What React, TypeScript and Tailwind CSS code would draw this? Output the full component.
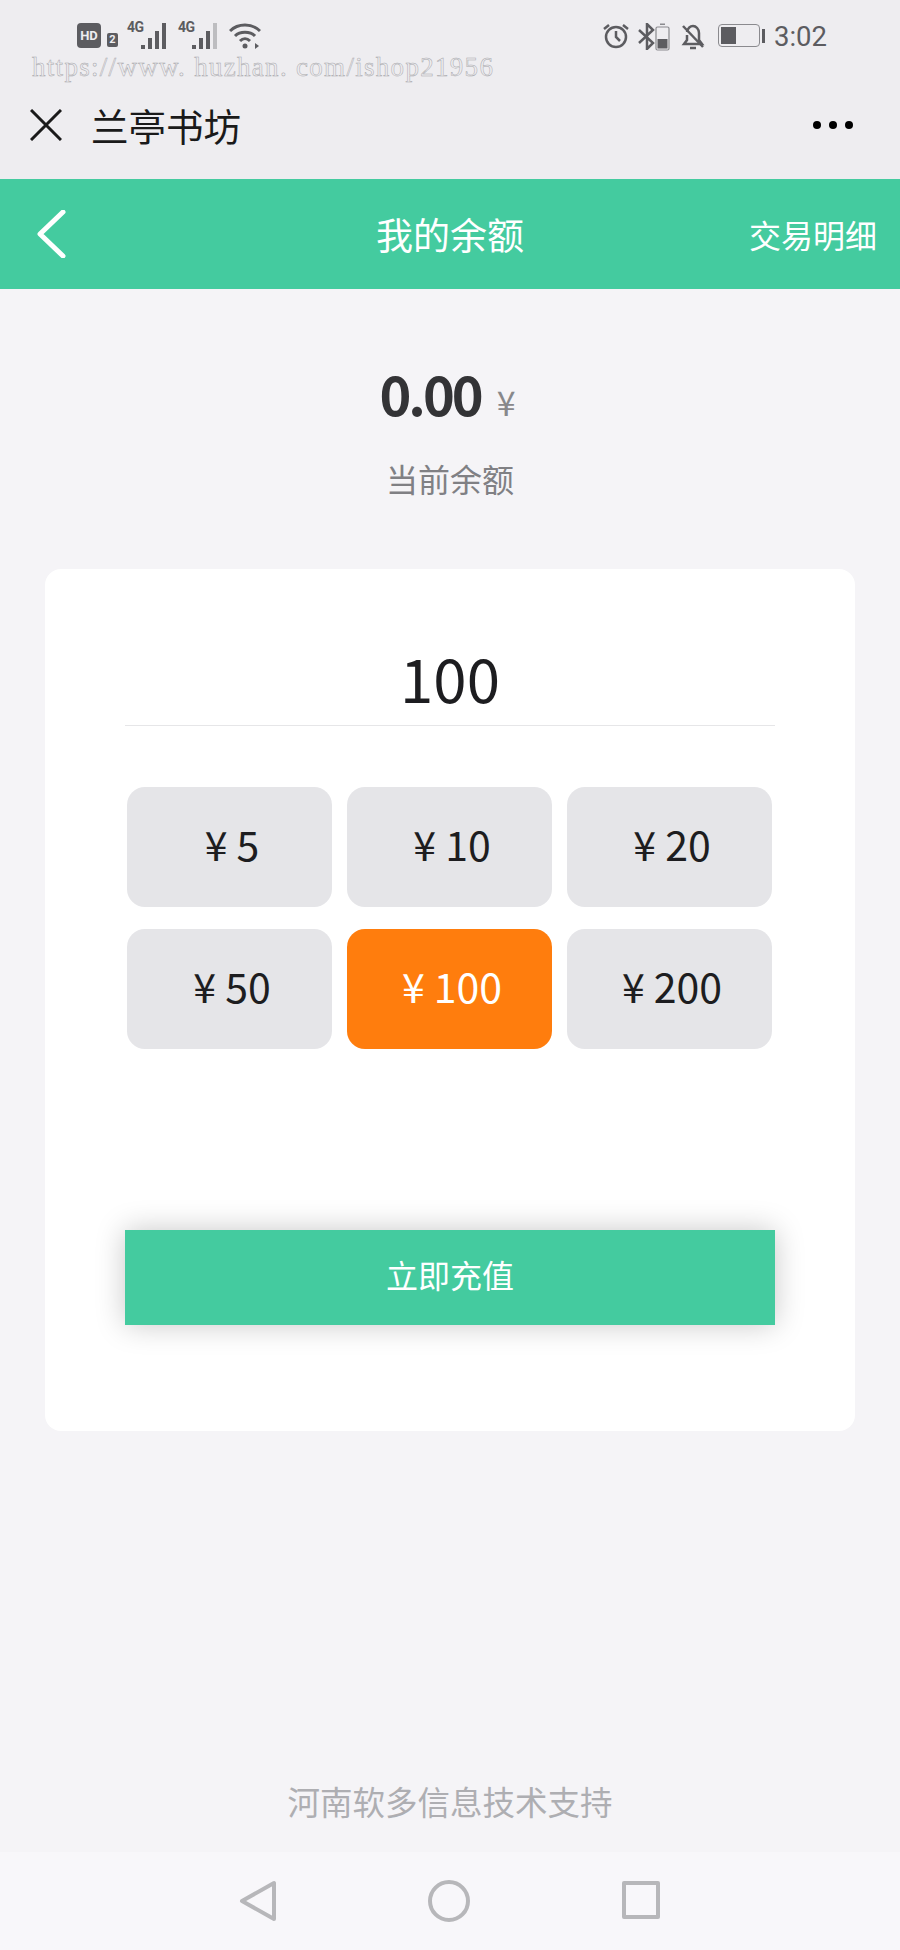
import { useState } from 'react';

const amounts = [5, 10, 20, 50, 100, 200];

// 4G label plus the four rising signal bars
const Signal = ({ dim }: { dim?: boolean }) => (
  <div className="relative h-[27px] w-[43px]">
    <span className="absolute left-[-1px] top-[-4px] font-['Roboto',sans-serif] text-[14px] font-bold leading-[16px] tracking-[-0.5px] text-[#5c5c60]">
      4G
    </span>
    <svg viewBox="0 0 43 27" className="absolute inset-0 h-[27px] w-[43px]" fill="#5c5c60">
      <rect x="13" y="22" width="4" height="4" />
      <rect x="20" y="15" width="4" height="11" />
      <rect x="27" y="8" width="4" height="18" />
      <rect x="34" y="0" width="4" height="26" fill={dim ? '#bdbdc0' : '#5c5c60'} />
    </svg>
  </div>
);

const StatusBar = () => (
  <div className="flex h-[60px] items-start justify-between pl-[77px] pr-[73px] pt-[23px] text-[#5c5c60]">
    <div className="flex items-start">
      <div className="flex h-[25px] w-[24px] items-center justify-center rounded-[4px] bg-[#5c5c60] font-['Roboto',sans-serif] text-[13px] font-bold text-[#eeedf0]">
        HD
      </div>
      <div className="ml-[6px] mt-[10px] flex h-[14px] w-[11px] items-center justify-center rounded-[2px] bg-[#5c5c60] font-['Roboto',sans-serif] text-[11px] font-bold text-[#eeedf0]">
        2
      </div>
      <div className="ml-[10px] mr-[8px]">
        <Signal />
      </div>
      <Signal dim />
      <svg viewBox="0 0 32 27" className="ml-[7px] h-[27px] w-[32px]" fill="none" stroke="#5c5c60" strokeWidth="3">
        <path d="M1 8C9 0 23 0 31 8" />
        <path d="M6 13C11 8 21 8 26 13" />
        <path d="M11 18C14 15 18 15 21 18" />
        <circle cx="16" cy="23" r="2.5" fill="#5c5c60" stroke="none" />
        <path d="M26 20v6l4-3z" fill="#5c5c60" stroke="none" />
      </svg>
    </div>
    <div className="flex items-start">
      <svg viewBox="0 0 26 26" className="h-[26px] w-[26px]" fill="none" stroke="#5c5c60" strokeWidth="2.5">
        <circle cx="13" cy="14" r="10" />
        <path d="M13 8v6l4 4" />
        <path d="M1 6l5-4M25 6l-5-4" />
      </svg>
      <svg viewBox="0 0 18 27" className="ml-[8px] h-[27px] w-[18px]" fill="none" stroke="#5c5c60" strokeWidth="2.5">
        <path d="M2 7l14 13-6 6V1l6 6L2 20" />
      </svg>
      <svg viewBox="0 0 15 28" className="h-[28px] w-[15px]" fill="none">
        <rect x="1" y="4" width="13" height="23" rx="1.5" stroke="#8a8a8e" strokeWidth="1.2" />
        <rect x="5" y="0.5" width="5" height="1.5" fill="#8a8a8e" />
        <rect x="2.5" y="16" width="10" height="9.5" fill="#5c5c60" />
      </svg>
      <svg viewBox="0 0 24 27" className="ml-[11px] h-[27px] w-[24px]" fill="none" stroke="#5c5c60" strokeWidth="2.5">
        <path d="M6 9c1-4 3-6 6-6s6 3 6 7v7l3 4H3l3-4v-5" />
        <path d="M9 25h6" />
        <path d="M2 3l20 21" />
      </svg>
      <div className="ml-[13px] mt-[1px] flex items-center">
        <div className="h-[23px] w-[42px] rounded-[4px] border border-[#8a8a8e] p-[2px]">
          <div className="h-full w-[15px] bg-[#5c5c60]" />
        </div>
        <div className="ml-[2px] h-[14px] w-[3px] bg-[#5c5c60]" />
      </div>
      <span className="ml-[9px] mt-[1px] font-['Roboto',sans-serif] text-[27.5px] leading-[26px] text-[#5c5c60]">3:02</span>
    </div>
  </div>
);

export default function App() {
  const [selected, setSelected] = useState(100);

  return (
    <div className="flex h-[1950px] w-[900px] flex-col overflow-hidden bg-[#f5f4f7] font-['Noto_Sans_CJK_SC','Noto_Sans',sans-serif]">
      {/* WeChat webview chrome */}
      <div className="relative h-[179px] bg-[#eeedf0]">
        <StatusBar />
        <span className="absolute left-[32px] top-[52px] font-['Liberation_Serif',serif] text-[27px] leading-[30px] tracking-[1.3px] text-transparent [-webkit-text-stroke:0.5px_#a8a8ac]">
          https://www. huzhan. com/ishop21956
        </span>
        <div className="flex h-[119px] items-center pl-[30px] pr-[47px] pt-[11px]">
          <svg viewBox="0 0 32 32" className="h-[32px] w-[32px]" fill="none" stroke="#1a1a1a" strokeWidth="3">
            <path d="M1 1l30 30M31 1L1 31" />
          </svg>
          <span className="ml-[29px] flex-1 text-[37.5px] leading-[50px] text-[#1a1a1a]">兰亭书坊</span>
          <div className="flex gap-[8px]">
            <div className="h-[8px] w-[8px] rounded-full bg-black" />
            <div className="h-[8px] w-[8px] rounded-full bg-black" />
            <div className="h-[8px] w-[8px] rounded-full bg-black" />
          </div>
        </div>
      </div>

      {/* green title bar */}
      <div className="grid h-[110px] grid-cols-[1fr_auto_1fr] items-center bg-[#44cb9f] text-white">
        <div className="pl-[36px]">
          <svg viewBox="0 0 30 48" className="h-[48px] w-[30px]" fill="none" stroke="white" strokeWidth="5" strokeLinecap="round" strokeLinejoin="round">
            <path d="M27 2L4 24l23 22" />
          </svg>
        </div>
        <h1 className="text-[37px] font-normal leading-[50px]">我的余额</h1>
        <div className="pr-[23px] text-right text-[32px] leading-[46px]">交易明细</div>
      </div>

      <div className="mt-[69px] flex items-baseline justify-center pr-[5px]">
        <span className="text-[54px] font-semibold leading-[70px] tracking-[-3px] text-[#333336]">0.00</span>
        <span className="ml-[16px] text-[34px] leading-[40px] text-[#88888b]">¥</span>
      </div>
      <p className="mt-[27px] text-center text-[32px] leading-[46px] text-[#808084]">当前余额</p>

      {/* recharge card */}
      <div className="mx-[45px] mt-[68px] h-[862px] shrink-0 rounded-[16px] bg-white px-[80px] pt-[70px]">
        <div className="border-b border-[#e6e6e8] pb-[11px] text-center text-[60px] leading-[75px] text-[#1d1d20]">100</div>
        <div className="mt-[61px] grid grid-cols-3 gap-x-[15px] gap-y-[22px] pl-[2px] pr-[3px]">
          {amounts.map((amount) => (
            <button
              key={amount}
              type="button"
              onClick={() => setSelected(amount)}
              className={
                amount === selected
                  ? 'h-[120px] rounded-[18px] bg-[#ff7d0d] pb-[7px] pl-[5px] text-[41px] text-white'
                  : 'h-[120px] rounded-[18px] bg-[#e5e5e8] pb-[7px] pl-[5px] text-[41px] text-[#1d1d20]'
              }
            >
              <span className="mr-[9px]">¥</span>
              {amount}
            </button>
          ))}
        </div>
        <button
          type="button"
          className="mt-[181px] h-[95px] w-full bg-[#44cb9f] pb-[8px] text-[32px] text-white shadow-[0_0_28px_rgba(0,0,0,0.22)]"
        >
          立即充值
        </button>
      </div>

      <p className="mt-[347px] text-center text-[32.5px] leading-[46px] text-[#aeaeb2]">河南软多信息技术支持</p>

      {/* android nav bar */}
      <div className="mt-[28px] flex flex-1 items-start justify-between bg-[#f8f7fa] pl-[239px] pr-[239px] pt-[28px]">
        <svg viewBox="0 0 38 42" className="h-[42px] w-[38px]" fill="none" stroke="#b7b7ba" strokeWidth="4" strokeLinejoin="round">
          <path d="M35 3v36L3 21z" />
        </svg>
        <svg viewBox="0 0 42 42" className="h-[42px] w-[42px]" fill="none" stroke="#b7b7ba" strokeWidth="4">
          <circle cx="21" cy="21" r="19" />
        </svg>
        <svg viewBox="0 0 40 40" className="h-[40px] w-[40px]" fill="none" stroke="#b7b7ba" strokeWidth="4" strokeLinejoin="round">
          <rect x="3" y="3" width="34" height="34" />
        </svg>
      </div>
    </div>
  );
}
